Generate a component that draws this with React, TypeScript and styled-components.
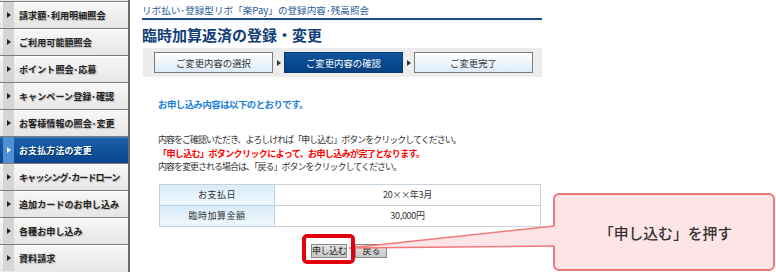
import React from "react";
import styled, { createGlobalStyle } from "styled-components";

const GlobalStyle = createGlobalStyle`
  html, body { margin: 0; padding: 0; background: #fff; }
  body { font-family: "Noto Sans CJK JP", "Liberation Sans", sans-serif; }
`;

const Page = styled.div`
  position: relative;
  width: 776px;
  height: 272px;
  overflow: hidden;
  display: flex;
  align-items: flex-start;
`;

const Sidebar = styled.ul`
  margin: 0;
  padding: 1px 0 0;
  list-style: none;
  width: 128px;
  height: 271px;
  flex: none;
  border-right: 2px solid #6a6a6a;
  background: #e8e8e8;
`;

const NavItem = styled.li<{ $active?: boolean }>`
  height: 26px;
  display: flex;
  align-items: stretch;
  overflow: hidden;
  border-top: 1px solid #7c7c7c;
  box-shadow: inset 0 1px 0 ${(p) => (p.$active ? "#3a7cc4" : "#fff")};
  background: ${(p) =>
    p.$active
      ? "linear-gradient(#1c62ae, #07458c)"
      : "linear-gradient(#f8f8f8, #e6e6e6)"};
`;

const Strip = styled.span<{ $active?: boolean }>`
  flex: none;
  width: 11px;
  margin-left: 3px;
  display: flex;
  align-items: center;
  justify-content: center;
  background: ${(p) => (p.$active ? "#4f8fd4" : "#d5d5d5")};

  &::before {
    content: "";
    border-left: 4px solid ${(p) => (p.$active ? "#fff" : "#222")};
    border-top: 3px solid transparent;
    border-bottom: 3px solid transparent;
  }
`;

const NavLabel = styled.span<{ $active?: boolean; $condensed?: boolean }>`
  padding-left: 5px;
  display: flex;
  align-items: center;
  font-size: 9px;
  font-weight: 700;
  letter-spacing: ${(p) => (p.$condensed ? "-0.9px" : "0.1px")};
  white-space: nowrap;
  color: ${(p) => (p.$active ? "#fff" : "#222")};
  text-shadow: ${(p) =>
    p.$active ? "1px 1px 1px #02305f" : "1px 1px 1px #b5b5b5"};
`;

const Main = styled.main`
  margin-left: 12px;
  width: 400px;
  display: flex;
  flex-direction: column;
`;

const Crumb = styled.div`
  padding-top: 3px;
  height: 15px;
  line-height: 14px;
  font-size: 9.6px;
  color: #2b5b9b;
  white-space: nowrap;
`;

const Rule = styled.div`
  height: 2px;
  background: #1d4b8b;
  box-shadow: 0 2px 3px rgba(0, 0, 0, 0.08);
`;

const Title = styled.h1`
  margin: 5px 0 0;
  font-size: 15px;
  line-height: 20px;
  font-weight: 700;
  color: #143f79;
  white-space: nowrap;
`;

const Steps = styled.div`
  margin: 3px 0 0 1px;
  height: 29px;
  padding-left: 11px;
  display: flex;
  align-items: center;
  background: #ececec;
`;

const Step = styled.div<{ $active?: boolean }>`
  width: 119px;
  height: 21px;
  box-sizing: border-box;
  border: 1px solid ${(p) => (p.$active ? "#063b75" : "#7d7d7d")};
  display: flex;
  align-items: center;
  justify-content: center;
  font-size: 9.4px;
  color: ${(p) => (p.$active ? "#fff" : "#333")};
  background: ${(p) =>
    p.$active
      ? "linear-gradient(#0d559e, #053f80)"
      : "linear-gradient(#ffffff, #dcebf8)"};
`;

const StepArrow = styled.span`
  width: 11px;
  display: flex;
  justify-content: center;

  &::before {
    content: "";
    border-left: 4px solid #333;
    border-top: 3px solid transparent;
    border-bottom: 3px solid transparent;
  }
`;

const Intro = styled.p`
  margin: 21px 0 0 16px;
  font-size: 9.4px;
  line-height: 12px;
  font-weight: 700;
  letter-spacing: -0.5px;
  color: #1a80d8;
  white-space: nowrap;
`;

const Notes = styled.div`
  margin: 23px 0 0 16px;
  font-size: 9px;
  line-height: 13.5px;
  letter-spacing: -1px;
  color: #333;
  white-space: nowrap;
`;

const Warn = styled.div`
  color: #f00;
  font-weight: 700;
  letter-spacing: -0.6px;
`;

const Table = styled.table`
  margin: 10px 0 0 17px;
  width: 382px;
  border-collapse: collapse;
  font-size: 9px;
  color: #333;
`;

const HeadCell = styled.th`
  width: 114px;
  height: 20px;
  padding: 0;
  border: 1px solid #c6d3de;
  font-weight: 400;
  letter-spacing: 0.5px;
  background: linear-gradient(#d9ecfa, #eff8fe);
`;

const Cell = styled.td`
  height: 20px;
  padding: 0;
  border: 1px solid #c6d3de;
  text-align: center;
  letter-spacing: -0.3px;
`;

const Buttons = styled.div`
  margin: 17px 0 0 169px;
  display: flex;
  gap: 8px;
`;

const Button = styled.button<{ $wide?: boolean }>`
  height: 14px;
  padding: ${(p) => (p.$wide ? "0 6px" : "0")};
  font-family: inherit;
  font-size: 9px;
  line-height: 12px;
  letter-spacing: ${(p) => (p.$wide ? "0" : "-0.4px")};
  color: #222;
  border: 1px solid #888;
  border-radius: 0;
  background: linear-gradient(#e4e4e4, #c8c8c8);
`;

const Highlight = styled.div`
  position: absolute;
  left: 302px;
  top: 234px;
  width: 53px;
  height: 30px;
  box-sizing: border-box;
  border: 4px solid #e2000f;
  border-radius: 5px;
`;

const Callout = styled.div`
  position: absolute;
  left: 553px;
  top: 193px;
  width: 222px;
  height: 78px;
  box-sizing: border-box;
  border: 2px solid #ef7a7a;
  border-radius: 6px;
  background: #fde4e7;
  display: flex;
  align-items: center;
  justify-content: center;
  padding: 0 0 0 3px;
  font-size: 14.8px;
  font-weight: 500;
  color: #333;
`;

const Pointer = styled.svg`
  position: absolute;
  left: 0;
  top: 0;
  pointer-events: none;
`;

const navItems = [
  "請求額･利用明細照会",
  "ご利用可能額照会",
  "ポイント照会･応募",
  "キャンペーン登録･確認",
  "お客様情報の照会･変更",
  "お支払方法の変更",
  "キャッシング･カードローン",
  "追加カードのお申し込み",
  "各種お申し込み",
  "資料請求",
];

export default function App() {
  return (
    <Page>
      <GlobalStyle />
      <Sidebar>
        {navItems.map((label, i) => (
          <NavItem key={label} $active={i === 5}>
            <Strip $active={i === 5} />
            <NavLabel $active={i === 5} $condensed={label.length > 11}>
              {label}
            </NavLabel>
          </NavItem>
        ))}
      </Sidebar>

      <Main>
        <Crumb>リボ払い･登録型リボ「楽Pay」の登録内容･残高照会</Crumb>
        <Rule />
        <Title>臨時加算返済の登録・変更</Title>
        <Steps>
          <Step>ご変更内容の選択</Step>
          <StepArrow />
          <Step $active>ご変更内容の確認</Step>
          <StepArrow />
          <Step>ご変更完了</Step>
        </Steps>

        <Intro>お申し込み内容は以下のとおりです。</Intro>
        <Notes>
          <div>内容をご確認いただき、よろしければ「申し込む」ボタンをクリックしてください。</div>
          <Warn>「申し込む」ボタンクリックによって、お申し込みが完了となります。</Warn>
          <div>内容を変更される場合は、「戻る」ボタンをクリックしてください。</div>
        </Notes>

        <Table>
          <tbody>
            <tr>
              <HeadCell>お支払日</HeadCell>
              <Cell>20××年3月</Cell>
            </tr>
            <tr>
              <HeadCell>臨時加算金額</HeadCell>
              <Cell>30,000円</Cell>
            </tr>
          </tbody>
        </Table>

        <Buttons>
          <Button>申し込む</Button>
          <Button $wide>戻る</Button>
        </Buttons>
      </Main>

      <Callout>「申し込む」を押す</Callout>
      <Pointer width="776" height="272">
        <polygon points="349,248 556,226 556,246" fill="#fde4e7" />
        <line x1="349" y1="248" x2="554" y2="226" stroke="#ef7a7a" strokeWidth="1.5" />
        <line x1="349" y1="248" x2="554" y2="246" stroke="#ef7a7a" strokeWidth="1.5" />
      </Pointer>
      <Highlight />
    </Page>
  );
}
